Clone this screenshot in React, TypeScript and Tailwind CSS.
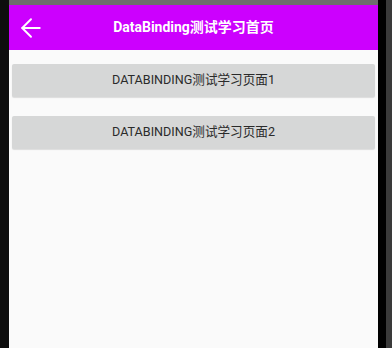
import { ArrowLeft } from 'lucide-react'

const pages = ['DATABINDING测试学习页面1', 'DATABINDING测试学习页面2']

export default function App() {
    return (
        <div
            className="flex w-[392px] h-[348px] overflow-hidden bg-black"
            style={{ fontFamily: 'Roboto, "Noto Sans CJK SC", sans-serif' }}
        >
            <div className="w-[9px] shrink-0 bg-[#0d0d0d]" />

            <div className="flex flex-col flex-1 bg-[#fafafa]">
                <div className="h-[5px] bg-[#6e6e6e]" />
                <div className="relative flex items-center justify-center h-[45px] bg-[#cc00fe]">
                    <ArrowLeft className="absolute left-[7px] w-[30px] h-[30px] text-white" strokeWidth={1.5} />
                    <h1 className="text-[14px] font-bold text-white">DataBinding测试学习首页</h1>
                </div>

                <div className="flex flex-col gap-[19px] pt-[14px] px-[3px]">
                    {pages.map((label) => (
                        <button
                            key={label}
                            className="h-[33px] bg-[#d6d7d7] rounded-[2px] shadow-[0_1px_1px_rgba(0,0,0,0.12)] text-[12.6px] text-[#2a2a2a]"
                        >
                            {label}
                        </button>
                    ))}
                </div>
            </div>

            <div className="w-[8px] shrink-0 bg-black" />
            <div className="w-[6px] shrink-0 bg-[#3a3a3a]" />
        </div>
    )
}
